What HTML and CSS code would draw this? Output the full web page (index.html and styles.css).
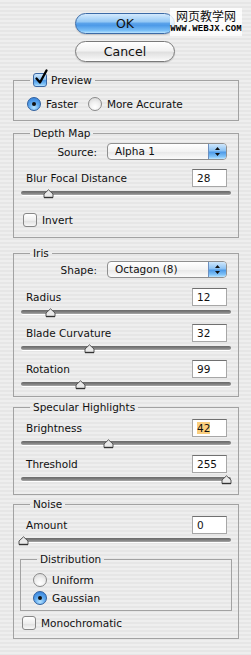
FILE: index.html
```html
<!DOCTYPE html>
<html lang="en">
<head>
  <meta charset="UTF-8" />
  <title>Lens Blur</title>
  <link rel="stylesheet" href="styles.css">
</head>
<body>
  <div class="dialog">
    <!-- OK / Cancel -->
    <div class="buttons">
      <button class="btn btn-ok">OK</button>
      <button class="btn">Cancel</button>
    </div>

    <div class="watermark">
      <div class="wm-cn">网页教学网</div>
      <div class="wm-url">WWW.WEBJX.COM</div>
    </div>

    <!-- Preview -->
    <fieldset class="group group-preview">
      <legend class="legend-check">
        <span class="check checked">
          <svg width="14" height="17" viewBox="0 0 14 17"><path d="M2.5 9.5 L6 13.5 L12.5 1.5" fill="none" stroke="#000" stroke-width="2.3" stroke-linecap="round" stroke-linejoin="round"/></svg>
        </span>Preview
      </legend>
      <div class="radio-row">
        <label class="option"><span class="radio on"></span>Faster</label>
        <label class="option"><span class="radio"></span>More Accurate</label>
      </div>
    </fieldset>

    <!-- Depth Map -->
    <fieldset class="group group-depth">
      <legend>Depth Map</legend>
      <div class="popup-row">
        <span>Source:</span>
        <div class="popup"><span class="popup-text">Alpha 1</span><span class="popup-arrows"><svg width="7" height="11" viewBox="0 0 7 11"><path d="M3.5 1 L6 4 L1 4 Z M3.5 10 L6 7 L1 7 Z" fill="#111"/></svg></span></div>
      </div>
      <div class="param param-first">
        <div class="param-row"><span>Blur Focal Distance</span><span class="field">28</span></div>
        <div class="slider"><div class="track"></div><svg class="thumb" style="left: 22px" width="11" height="10" viewBox="0 0 11 10"><path d="M5.5 0.8 L10 5 L10 8.5 L1 8.5 L1 5 Z" fill="#e9e9e9" stroke="#555" stroke-width="1"/><path d="M1 8.5 L10 8.5" stroke="#333" stroke-width="1.4"/></svg></div>
      </div>
      <label class="option option-box invert"><span class="check"></span>Invert</label>
    </fieldset>

    <!-- Iris -->
    <fieldset class="group group-iris">
      <legend>Iris</legend>
      <div class="popup-row">
        <span>Shape:</span>
        <div class="popup"><span class="popup-text">Octagon (8)</span><span class="popup-arrows"><svg width="7" height="11" viewBox="0 0 7 11"><path d="M3.5 1 L6 4 L1 4 Z M3.5 10 L6 7 L1 7 Z" fill="#111"/></svg></span></div>
      </div>
      <div class="param param-first">
        <div class="param-row"><span>Radius</span><span class="field">12</span></div>
        <div class="slider"><div class="track"></div><svg class="thumb" style="left: 24px" width="11" height="10" viewBox="0 0 11 10"><path d="M5.5 0.8 L10 5 L10 8.5 L1 8.5 L1 5 Z" fill="#e9e9e9" stroke="#555" stroke-width="1"/><path d="M1 8.5 L10 8.5" stroke="#333" stroke-width="1.4"/></svg></div>
      </div>
      <div class="param">
        <div class="param-row"><span>Blade Curvature</span><span class="field">32</span></div>
        <div class="slider"><div class="track"></div><svg class="thumb" style="left: 63px" width="11" height="10" viewBox="0 0 11 10"><path d="M5.5 0.8 L10 5 L10 8.5 L1 8.5 L1 5 Z" fill="#e9e9e9" stroke="#555" stroke-width="1"/><path d="M1 8.5 L10 8.5" stroke="#333" stroke-width="1.4"/></svg></div>
      </div>
      <div class="param">
        <div class="param-row"><span>Rotation</span><span class="field">99</span></div>
        <div class="slider"><div class="track"></div><svg class="thumb" style="left: 54px" width="11" height="10" viewBox="0 0 11 10"><path d="M5.5 0.8 L10 5 L10 8.5 L1 8.5 L1 5 Z" fill="#e9e9e9" stroke="#555" stroke-width="1"/><path d="M1 8.5 L10 8.5" stroke="#333" stroke-width="1.4"/></svg></div>
      </div>
    </fieldset>

    <!-- Specular Highlights -->
    <fieldset class="group group-specular">
      <legend>Specular Highlights</legend>
      <div class="param">
        <div class="param-row"><span>Brightness</span><span class="field"><span class="selected">42</span></span></div>
        <div class="slider"><div class="track"></div><svg class="thumb" style="left: 82px" width="11" height="10" viewBox="0 0 11 10"><path d="M5.5 0.8 L10 5 L10 8.5 L1 8.5 L1 5 Z" fill="#e9e9e9" stroke="#555" stroke-width="1"/><path d="M1 8.5 L10 8.5" stroke="#333" stroke-width="1.4"/></svg></div>
      </div>
      <div class="param">
        <div class="param-row"><span>Threshold</span><span class="field">255</span></div>
        <div class="slider"><div class="track"></div><svg class="thumb" style="left: 200px" width="11" height="10" viewBox="0 0 11 10"><path d="M5.5 0.8 L10 5 L10 8.5 L1 8.5 L1 5 Z" fill="#e9e9e9" stroke="#555" stroke-width="1"/><path d="M1 8.5 L10 8.5" stroke="#333" stroke-width="1.4"/></svg></div>
      </div>
    </fieldset>

    <!-- Noise -->
    <fieldset class="group group-noise">
      <legend>Noise</legend>
      <div class="param">
        <div class="param-row"><span>Amount</span><span class="field">0</span></div>
        <div class="slider"><div class="track"></div><svg class="thumb" style="left: -3px" width="11" height="10" viewBox="0 0 11 10"><path d="M5.5 0.8 L10 5 L10 8.5 L1 8.5 L1 5 Z" fill="#e9e9e9" stroke="#555" stroke-width="1"/><path d="M1 8.5 L10 8.5" stroke="#333" stroke-width="1.4"/></svg></div>
      </div>
      <fieldset class="group group-dist">
        <legend>Distribution</legend>
        <label class="option"><span class="radio"></span>Uniform</label>
        <label class="option"><span class="radio on"></span>Gaussian</label>
      </fieldset>
      <label class="option option-box mono"><span class="check"></span>Monochromatic</label>
    </fieldset>
  </div>
</body>
</html>
```

FILE: styles.css
```css
:root {
  --linha: #a2a2a2;
  --texto: #111111;
  --fonte: 'DejaVu Sans', 'Liberation Sans', sans-serif;
}

* {
  box-sizing: border-box;
}

html,
body {
  margin: 0;
  padding: 0;
  height: 100%;
}

body {
  font-family: var(--fonte);
  font-size: 10.5px;
  color: var(--texto);
  background: repeating-linear-gradient(to bottom, #eeeeee 0 2px, #e6e6e6 2px 4px);
}

.dialog {
  position: relative;
  width: 251px;
  padding-top: 13px;
}

/* Botões */
.buttons {
  display: flex;
  flex-direction: column;
  gap: 7px;
  width: 100px;
  margin-left: 75px;
}

.btn {
  height: 21px;
  padding: 0;
  border: 1px solid #7a7a7a;
  border-radius: 11px;
  font-family: var(--fonte);
  font-size: 12.5px;
  color: #111;
  background: linear-gradient(#ffffff, #f2f2f2 45%, #e0e0e0 55%, #f4f4f4 90%, #ffffff);
  box-shadow: 0 1px 1px rgba(0, 0, 0, 0.15);
}

.btn-ok {
  border-color: #3b6aa6;
  background: linear-gradient(#d4eafd, #96c9f5 40%, #5aa2ea 50%, #4d9ae8 60%, #7cc0f7 88%, #bde6ff);
}

.watermark {
  position: absolute;
  top: 8px;
  left: 170px;
  width: 72px;
  padding: 1px 0 2px;
  background: rgba(255, 255, 255, 0.8);
  text-align: center;
}

.wm-cn {
  font-family: 'Noto Sans CJK SC', sans-serif;
  font-size: 12px;
  line-height: 14px;
  color: #111;
}

.wm-url {
  margin-top: 2px;
  font-family: 'Liberation Mono', monospace;
  font-size: 9px;
  font-weight: bold;
  line-height: 9px;
  letter-spacing: 0.1px;
  color: #000;
}

/* Grupos */
.group {
  width: 226px;
  margin: 0 0 0 13px;
  padding: 0 11px 0 12px;
  border: 1px solid var(--linha);
  min-width: 0;
}

.group legend {
  display: flex;
  align-items: center;
  height: 14px;
  margin-left: 4px;
  padding: 0 3px;
  line-height: 14px;
}

.legend-check {
  gap: 4px;
}

.group-preview {
  margin-top: 11px;
  padding-top: 10px;
  padding-bottom: 9px;
}

.group-depth {
  margin-top: 5px;
  padding-top: 3px;
  padding-bottom: 10px;
}

.group-iris {
  margin-top: 8px;
  padding-top: 1px;
  padding-bottom: 0;
}

.group-specular {
  margin-top: 3px;
  padding-top: 5px;
  padding-bottom: 3px;
}

.group-noise {
  margin-top: 2px;
  padding-top: 5px;
  padding-bottom: 8px;
}

.group-dist {
  width: auto;
  margin: 0 -5px 0 -6px;
  padding: 7px 12px 5px 12px;
  display: flex;
  flex-direction: column;
  gap: 4px;
}

/* Opções */
.radio-row {
  display: flex;
  gap: 10px;
  margin-left: 1px;
}

.option {
  display: flex;
  align-items: center;
  gap: 5px;
  height: 14px;
}

.invert {
  margin-top: 8px;
  margin-left: -3px;
}

.mono {
  margin-top: 5px;
  margin-left: -4px;
}

.check {
  position: relative;
  flex: none;
  width: 14px;
  height: 14px;
  border: 1px solid #878787;
  border-radius: 3px;
  background: linear-gradient(#ffffff, #ededed 55%, #e2e2e2 60%, #f8f8f8);
}

.check.checked {
  border-color: #3a67a3;
  background: linear-gradient(#cde6fc, #8cc2f3 45%, #4f9be8 55%, #7fc2f7 85%, #b7e2ff);
}

.check svg {
  position: absolute;
  left: 0;
  top: -5px;
}

.radio {
  position: relative;
  flex: none;
  width: 14px;
  height: 14px;
  border: 1px solid #8a8a8a;
  border-radius: 50%;
  background: radial-gradient(circle at 50% 75%, #ffffff, #f0f0f0 45%, #d2d2d2);
}

.radio.on {
  border-color: #2f5f9e;
  background: radial-gradient(circle at 50% 80%, #b4e2ff, #5ea8ee 45%, #2c79d6);
}

.radio.on::after {
  content: '';
  position: absolute;
  left: 4px;
  top: 4px;
  width: 4px;
  height: 4px;
  border-radius: 50%;
  background: #111;
}

/* Menus */
.popup-row {
  display: flex;
  justify-content: flex-end;
  align-items: center;
  gap: 10px;
  height: 17px;
}

.popup {
  display: flex;
  width: 120px;
  height: 17px;
  border: 1px solid #8f8f8f;
  border-radius: 4px;
  overflow: hidden;
  background: linear-gradient(#ffffff, #f3f3f3 50%, #e9e9e9 55%, #fbfbfb);
}

.popup-text {
  flex: 1;
  padding-left: 7px;
  line-height: 15px;
}

.popup-arrows {
  display: flex;
  align-items: center;
  justify-content: center;
  width: 18px;
  border-left: 1px solid #6b8fc0;
  background: linear-gradient(#cfe7fc, #8cc2f3 45%, #4f9be8 55%, #82c4f8 85%, #bfe6ff);
}

/* Parâmetros com slider */
.param {
  height: 36px;
}

.param-first {
  margin-top: 9px;
}

.group-iris .param-first {
  margin-top: 10px;
}

.param-row {
  display: flex;
  justify-content: space-between;
  align-items: center;
  height: 18px;
}

.field {
  width: 35px;
  height: 18px;
  padding-left: 4px;
  border: 1px solid #a7a7a7;
  border-top-color: #707070;
  background: #ffffff;
  line-height: 16px;
}

.selected {
  background: #fbcf7e;
}

.slider {
  position: relative;
  height: 18px;
  margin: 0 -4px 0 -5px;
  padding-top: 4px;
}

.track {
  height: 4px;
  border-radius: 2px;
  background: linear-gradient(#6a6a6a, #7d7d7d 50%, #a9a9a9);
  box-shadow: 0 1px 0 #ffffff;
}

.thumb {
  position: absolute;
  top: 2px;
}
```
